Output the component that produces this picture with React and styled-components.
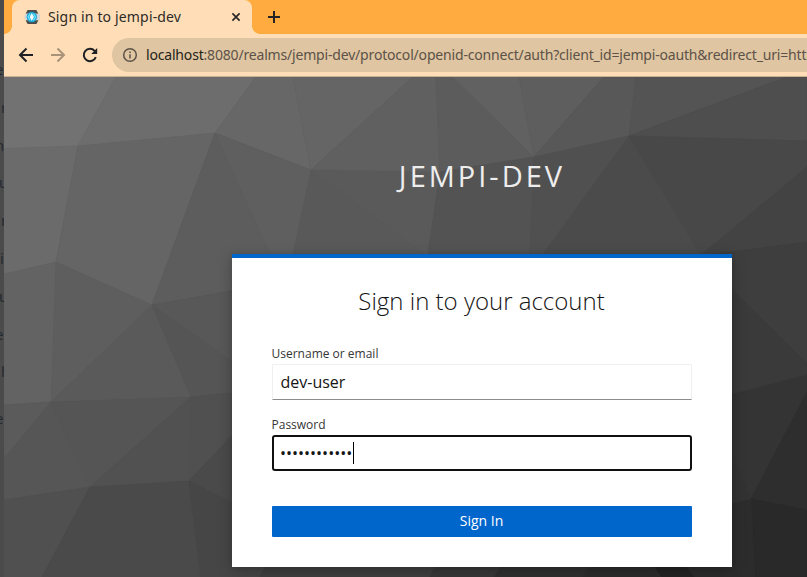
import React from "react";
import styled, { createGlobalStyle } from "styled-components";

const GlobalStyle = createGlobalStyle`
  * { box-sizing: border-box; }
  html, body { margin: 0; padding: 0; }
  body { overflow: hidden; background: #4b4b4b; font-family: "Open Sans", sans-serif; }
`;

const Desktop = styled.div`
  display: flex;
  width: 807px;
  height: 577px;
  overflow: hidden;
`;

const Behind = styled.aside`
  flex: 0 0 4px;
  overflow: hidden;
  background: #4b4b4b;
  padding-top: 50px;
`;

const BehindRow = styled.div`
  height: 37.8px;
  line-height: 38px;
  font-family: "Noto Sans", sans-serif;
  font-size: 15px;
  color: #242a30;
  text-indent: ${(p) => p.$shift}px;
  white-space: nowrap;

  &:last-child { margin-top: 9px; }
`;

const Browser = styled.div`
  flex: 1;
  min-width: 0;
  display: flex;
  flex-direction: column;
`;

const TabStrip = styled.div`
  height: 34px;
  display: flex;
  background: #ffab40;
`;

const TabCurve = styled.div`
  width: 8px;
  height: 8px;
  align-self: flex-end;
  background: radial-gradient(circle at ${(p) => (p.$right ? "100%" : "0")} 0, transparent 7.5px, #ffdeb7 8.2px);
`;

const Tab = styled.div`
  width: 240px;
  display: flex;
  align-items: center;
  padding: 0 10px 0 12px;
  background: #ffdeb7;
  border-radius: 8px 8px 0 0;
`;

const TabTitle = styled.span`
  flex: 1;
  margin-left: 8px;
  font: 14px/20px "Noto Sans", sans-serif;
  letter-spacing: 0.16px;
  color: #2d2a27;
  white-space: nowrap;
`;

const NewTab = styled.div`
  display: flex;
  align-items: center;
  margin-left: 7px;
`;

const Toolbar = styled.div`
  height: 43px;
  display: flex;
  align-items: center;
  background: #ffdeb7;
  border-bottom: 1px solid #c9b092;
  padding: 0 0 1px 12px;
`;

const NavIcon = styled.svg`
  flex: none;
  width: 20px;
  height: 20px;
  margin-right: 12px;
  fill: none;
  stroke: ${(p) => (p.$dim ? "#a8927a" : "#202124")};
  stroke-width: 2;
`;

const AddressBar = styled.div`
  flex: 1;
  min-width: 0;
  height: 34px;
  display: flex;
  align-items: center;
  background: #dfc5a1;
  border-radius: 17px 0 0 17px;
  padding-left: 10px;
  overflow: hidden;
`;

const InfoIcon = styled.svg`
  flex: none;
  width: 16px;
  height: 16px;
  fill: none;
  stroke: #5c5248;
  stroke-width: 1.5;
`;

const Url = styled.span`
  margin-left: 8px;
  font: 14px/20px "Noto Sans", sans-serif;
  letter-spacing: -0.18px;
  color: #5c5248;
  white-space: nowrap;
`;

const Host = styled.span`
  color: #241f1a;
`;

const Page = styled.main`
  position: relative;
  flex: 1;
  overflow: hidden;
  display: flex;
  flex-direction: column;
  padding-left: 228px;
`;

const Backdrop = styled.svg`
  position: absolute;
  inset: 0;
  width: 803px;
  height: 500px;
`;

const Realm = styled.h1`
  position: relative;
  width: 500px;
  height: 177px;
  margin: 0;
  padding: 80px 0 0;
  text-align: center;
  font-size: 29px;
  line-height: 38px;
  font-weight: 400;
  letter-spacing: 3px;
  text-transform: uppercase;
  color: #ededed;
  white-space: nowrap;
`;

const Card = styled.section`
  position: relative;
  width: 500px;
  height: 313px;
  flex: none;
  background: #fff;
  border-top: 4px solid #06c;
  box-shadow: 0 4px 14px rgba(3, 3, 3, 0.24), 0 0 5px rgba(3, 3, 3, 0.08);
  padding: 27px 40px 30px;
  display: flex;
  flex-direction: column;
`;

const CardTitle = styled.h2`
  margin: 0 1px 28px 0;
  text-align: center;
  font-size: 24px;
  line-height: 32px;
  font-weight: 300;
  color: #151515;
`;

const Label = styled.label`
  font-size: 12px;
  line-height: 18px;
  height: 19px;
  margin-left: -0.5px;
  color: #363636;
`;

const Field = styled.div`
  height: 36px;
  display: flex;
  align-items: center;
  font-size: 16px;
  line-height: 24px;
  color: #151515;
  background: #fff;
  padding-left: ${(p) => (p.$focused ? 6 : 7.5)}px;
  margin-bottom: ${(p) => (p.$focused ? 35 : 16)}px;
  border: ${(p) => (p.$focused ? "2px solid #101010" : "1px solid #f0f0f0")};
  border-bottom-color: ${(p) => (p.$focused ? "#101010" : "#8a8d90")};
  border-radius: ${(p) => (p.$focused ? 3 : 0)}px;
`;

const Caret = styled.span`
  width: 1px;
  height: 22px;
  margin-left: 1px;
  background: #000;
`;

const SignIn = styled.button`
  height: 31px;
  border: 0;
  border-radius: 1px;
  background: #06c;
  color: #fff;
  font: 14px/21px "Open Sans", sans-serif;
  padding: 0 1px 2px 0;
`;

/* Facets of the low-poly wall, in window coordinates. */
const facets = [
  ["4,77 116,77 78,146 4,148.5", "#727272"],
  ["116,77 256,77 215,133 78,146", "#6d6d6d"],
  ["4,148.5 78,146 56,262 4,274", "#6b6b6b"],
  ["78,146 215,133 152,305 56,262", "#656565"],
  ["256,77 293,77 311,170 215,133", "#676767"],
  ["293,77 413,77 311,170", "#656565"],
  ["413,77 436,77 440,172 311,170", "#606060"],
  ["436,77 453,77 534,157 440,172", "#5c5c5c"],
  ["453,77 519,77 534,157", "#616161"],
  ["519,77 604,77 534,157", "#5e5e5e"],
  ["604,77 636,77 629,136 534,157", "#585858"],
  ["636,77 787,77 629,136", "#545454"],
  ["787,77 807,77 807,141 629,136", "#4e4e4e"],
  ["215,133 270,254 232,291 152,305", "#5d5d5d"],
  ["215,133 311,170 293,254 270,254", "#5f5f5f"],
  ["311,170 425,254 293,254", "#595959"],
  ["311,170 440,172 428,254 425,254", "#5a5a5a"],
  ["440,172 534,157 530,254 428,254", "#535353"],
  ["534,157 629,136 543,254 530,254", "#505050"],
  ["629,136 700,254 543,254", "#4b4b4b"],
  ["629,136 807,141 807,167 705,254 700,254", "#484848"],
  ["807,167 807,242 700,256", "#434343"],
  ["807,242 807,363 732,290 700,256", "#3e3e3e"],
  ["700,256 732,290 807,363 807,375 700,403", "#3a3a3a"],
  ["807,375 807,392 751,499 732,455 700,403", "#343434"],
  ["807,392 807,510 751,499", "#2e2e2e"],
  ["751,499 807,510 807,577 755,577", "#292929"],
  ["751,499 755,577 655,577 700,511", "#2c2c2c"],
  ["732,455 751,499 700,511 700,440", "#323232"],
  ["4,274 56,262 51,402 4,405", "#636363"],
  ["56,262 152,305 51,402", "#5e5e5e"],
  ["152,305 191,397 51,402", "#5a5a5a"],
  ["152,305 232,361 260,390 191,397", "#555555"],
  ["152,305 260,286 260,381", "#585858"],
  ["4,405 51,402 4,459", "#5b5b5b"],
  ["4,459 51,402 90,487 4,500", "#565656"],
  ["51,402 191,397 90,487", "#555555"],
  ["191,397 189,481 90,487", "#515151"],
  ["191,397 260,390 260,406 189,481", "#505050"],
  ["189,481 260,406 260,516", "#4a4a4a"],
  ["4,500 90,487 42,577 4,577", "#505050"],
  ["90,487 189,481 201,577 42,577", "#4a4a4a"],
  ["189,481 270,523 260,577 201,577", "#464646"],
  ["270,555 440,555 430,577 260,577", "#3f3f3f"],
  ["440,555 510,555 494,577 430,577", "#383838"],
  ["510,555 600,555 582,577 494,577", "#303030"],
  ["600,555 646,555 662,577 582,577", "#2c2c2c"],
  ["646,555 676,555 694,577 662,577", "#242424"],
];

const behindText = [
  ["e", -5], ["r", 1], ["n", -5], ["u", -1], ["r", 1],
  ["i", 0], ["u", -1], ["e", -5], ["h", 1], ["e", -5],
];

function Favicon() {
  return (
    <svg width="16" height="16" viewBox="0 0 16 16">
      <path d="M3.6 1h8.8l2 3.7H1.6zM1.6 11.3h12.8l-2 3.7H3.6z" fill="#4d4d4d" />
      <path d="M1.6 4.7h12.8L16 5v6H1.8L0 8z" fill="#d5d5d5" />
      <circle cx="7.8" cy="8" r="5.2" fill="#18a7d8" />
      <path d="M6.2 4.6 4.1 8l2.1 3.4M9.4 4.6 11.5 8l-2.1 3.4" fill="none" stroke="#6ce2f8" strokeWidth="1.3" />
      <path d="M7.8 4 10 8l-2.2 4-2.2-4z" fill="#eefaff" />
    </svg>
  );
}

export default function App() {
  return (
    <>
      <GlobalStyle />
      <Desktop>
        <Behind>
          {behindText.map(([t, shift], i) => (
            <BehindRow key={i} $shift={shift}>{t}</BehindRow>
          ))}
        </Behind>
        <Browser>
          <TabStrip>
            <TabCurve />
            <Tab>
              <Favicon />
              <TabTitle>Sign in to jempi-dev</TabTitle>
              <svg width="12" height="12" viewBox="0 0 12 12" fill="none" stroke="#242424" strokeWidth="1.6">
                <path d="m2.4 2.4 7.2 7.2m0-7.2L2.4 9.6" />
              </svg>
            </Tab>
            <TabCurve $right />
            <NewTab>
              <svg width="14" height="14" viewBox="0 0 14 14" stroke="#242424" strokeWidth="2">
                <path d="M7 1v12M1 7h12" />
              </svg>
            </NewTab>
          </TabStrip>
          <Toolbar>
            <NavIcon viewBox="0 0 20 20"><path d="M17 10H4.5M10.5 3.5 4 10l6.5 6.5" /></NavIcon>
            <NavIcon viewBox="0 0 20 20" $dim><path d="M3 10h12.5M9.5 3.5 16 10l-6.5 6.5" /></NavIcon>
            <NavIcon viewBox="0 0 20 20">
              <path d="M15.8 12.2a6.2 6.2 0 1 1-1.2-6.4L16 7.2" />
              <path d="M17.2 3v6h-6z" fill="#202124" stroke="none" />
            </NavIcon>
            <AddressBar>
              <InfoIcon viewBox="0 0 16 16">
                <circle cx="8" cy="8" r="6.3" />
                <path d="M8 7.2v4.3M8 4.4v1.7" />
              </InfoIcon>
              <Url>
                <Host>localhost</Host>
                :8080/realms/jempi-dev/protocol/openid-connect/auth?client_id=jempi-oauth&amp;redirect_uri=htt
              </Url>
            </AddressBar>
          </Toolbar>
          <Page>
            <Backdrop viewBox="4 77 803 500">
              <rect x="4" y="77" width="803" height="500" fill="#4a4a4a" />
              {facets.map(([points, fill]) => (
                <polygon key={points} points={points} fill={fill} stroke={fill} strokeWidth="0.6" />
              ))}
            </Backdrop>
            <Realm>jempi-dev</Realm>
            <Card>
              <CardTitle>Sign in to your account</CardTitle>
              <Label>Username or email</Label>
              <Field>dev-user</Field>
              <Label>Password</Label>
              <Field $focused>
                ••••••••••••
                <Caret />
              </Field>
              <SignIn>Sign In</SignIn>
            </Card>
          </Page>
        </Browser>
      </Desktop>
    </>
  );
}
